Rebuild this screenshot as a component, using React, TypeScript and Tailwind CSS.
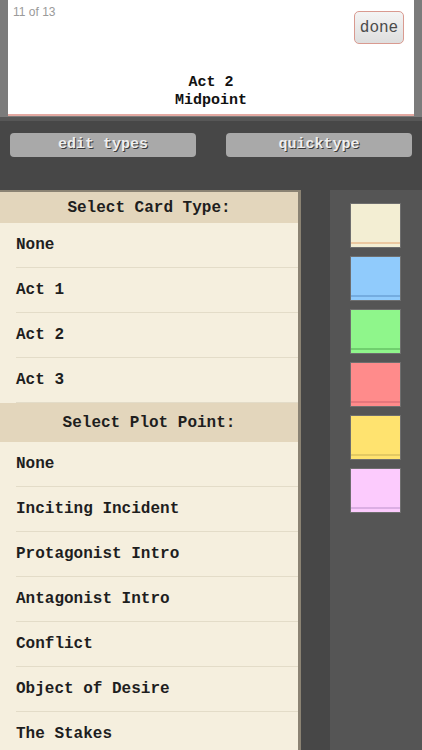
import React from "react";

const mono = { fontFamily: '"Liberation Mono", "Courier New", monospace' };

const cardTypes = ["None", "Act 1", "Act 2", "Act 3"];
const plotPoints = [
  "None",
  "Inciting Incident",
  "Protagonist Intro",
  "Antagonist Intro",
  "Conflict",
  "Object of Desire",
  "The Stakes",
];

const swatches = [
  { bg: "bg-[#f3eed3]", stripe: "bg-[#ebc8a0]" },
  { bg: "bg-[#90cbfc]", stripe: "bg-[#74ace0]" },
  { bg: "bg-[#8ff68b]", stripe: "bg-[#70d06e]" },
  { bg: "bg-[#ff8b8b]", stripe: "bg-[#e6767c]" },
  { bg: "bg-[#ffe36f]", stripe: "bg-[#e3c962]" },
  { bg: "bg-[#fccbfd]", stripe: "bg-[#dcaee4]" },
];

function Row({ label }: { label: string }) {
  return (
    <div className="h-[45px] pl-[16px] flex">
      <div className="flex-1 flex items-center border-b border-[#e3dcc8] text-[16px] font-bold text-[#1e1e1e]">
        {label}
      </div>
    </div>
  );
}

export default function App() {
  return (
    <div className="w-[422px] h-[750px] overflow-hidden bg-[#474747]" style={mono}>
      {/* card preview */}
      <div className="h-[117px] bg-[#7b7b7b] px-[8px]">
        <div className="h-[116px] bg-white border-b-2 border-[#e3a9a2] flex flex-col">
          <div className="flex justify-between items-start">
            <span
              className="pl-[5px] pt-[3px] text-[12px] text-[#9a9a9a]"
              style={{ fontFamily: '"Liberation Sans", Arial, sans-serif' }}
            >
              11 of 13
            </span>
            <button className="mt-[11px] mr-[10px] w-[50px] h-[33px] rounded-[5px] border border-[#d99a90] bg-gradient-to-b from-[#f4f4f4] to-[#dedede] text-[16px] text-[#4a4a4a]">
              done
            </button>
          </div>
          <div className="mt-auto pb-[4px] text-center text-[15px] leading-[18px] font-bold text-[#111]">
            <div>Act 2</div>
            <div>Midpoint</div>
          </div>
        </div>
      </div>
      <div className="h-[4px] bg-[#575757]" />

      {/* actions */}
      <div className="mt-[12px] px-[10px] flex justify-between">
        {["edit types", "quicktype"].map((t) => (
          <button
            key={t}
            className="w-[186px] h-[24px] rounded-[4px] bg-[#a9a9a9] text-[15px] font-bold text-[#eeeeee] [text-shadow:1px_1px_0_#3a3a3a]"
          >
            {t}
          </button>
        ))}
      </div>

      {/* pickers */}
      <div className="mt-[33px] flex">
        <div className="w-[301px] h-[560px] bg-[#f5efde] border-t-2 border-r-[3px] border-[#8b8373]">
          <div className="h-[31px] bg-[#e3d6bc] flex items-center justify-center text-[16px] font-bold text-[#1e1e1e]">
            Select Card Type:
          </div>
          {cardTypes.map((t) => (
            <Row key={t} label={t} />
          ))}
          <div className="h-[39px] bg-[#e3d6bc] flex items-center justify-center text-[16px] font-bold text-[#1e1e1e]">
            Select Plot Point:
          </div>
          {plotPoints.map((t) => (
            <Row key={t} label={t} />
          ))}
        </div>

        <div className="ml-[29px] flex-1 h-[560px] bg-[#555555] pl-[20px] pt-[13px] flex flex-col gap-[8px]">
          {swatches.map((s, i) => (
            <div
              key={i}
              className={`w-[51px] h-[45px] border border-[#6e6e6e] ${s.bg} flex flex-col justify-end pb-[3px]`}
            >
              <div className={`h-[2px] ${s.stripe}`} />
            </div>
          ))}
        </div>
      </div>
    </div>
  );
}
